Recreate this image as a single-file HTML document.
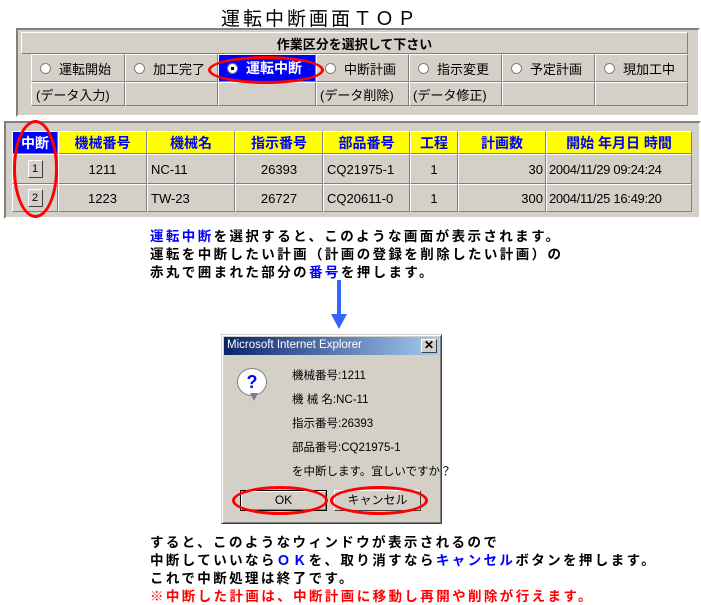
<!DOCTYPE html>
<html><head><meta charset="utf-8"><style>
*{margin:0;padding:0;box-sizing:border-box}
body{width:701px;height:602px;background:#fff;position:relative;overflow:hidden;font-family:"Liberation Sans","Noto Sans CJK JP",sans-serif;color:#000}
.a{position:absolute}
.cell{position:absolute;background:#d4d0c8;border:1px solid;border-color:#fff #808080 #808080 #fff;font-size:13px;display:flex;align-items:center;white-space:nowrap}
.rad{display:inline-block;width:11px;height:11px;border-radius:50%;background:#fff;border:1px solid #808080;margin:0 8px 0 8px;position:relative}
.t{font-size:13.5px;font-weight:bold;letter-spacing:2.4px;white-space:nowrap;left:150px}
.hd{background:#ff0;color:#0000ff;font-weight:bold;justify-content:center;font-size:14px}
.btn{width:15px;height:18px;background:#d4d0c8;border:1px solid;border-color:#fff #404040 #404040 #fff;font-size:11px;display:flex;align-items:center;justify-content:center;margin:auto}
.ell{position:absolute;border:3px solid #f00;border-radius:50%}
</style></head><body>
<div class="a" style="left:221px;top:4px;font-size:19px;letter-spacing:3px">運転中断画面ＴＯＰ</div>
<div class="a" style="left:16px;top:28px;width:684px;height:89px;background:#d4d0c8;border:2px solid;border-color:#808080 #fff #fff #808080"></div>
<div class="cell" style="left:21px;top:32px;width:667px;height:22px;justify-content:center;font-weight:bold">作業区分を選択して下さい</div>
<div class="cell" style="left:31px;top:54px;width:94px;height:28px"><span class="rad"></span>運転開始</div>
<div class="cell" style="left:125px;top:54px;width:93px;height:28px"><span class="rad"></span>加工完了</div>
<div class="cell" style="left:218px;top:54px;width:98px;height:28px;background:#0000ff;color:#fff;font-weight:bold;font-size:14px"><span class="rad"><span class="a" style="left:3px;top:3px;width:3px;height:3px;background:#000"></span></span>運転中断</div>
<div class="cell" style="left:316px;top:54px;width:93px;height:28px"><span class="rad"></span>中断計画</div>
<div class="cell" style="left:409px;top:54px;width:93px;height:28px"><span class="rad"></span>指示変更</div>
<div class="cell" style="left:502px;top:54px;width:93px;height:28px"><span class="rad"></span>予定計画</div>
<div class="cell" style="left:595px;top:54px;width:93px;height:28px"><span class="rad"></span>現加工中</div>
<div class="cell" style="left:31px;top:82px;width:94px;height:24px;padding-left:4px">(データ入力)</div>
<div class="cell" style="left:125px;top:82px;width:93px;height:24px"></div>
<div class="cell" style="left:218px;top:82px;width:98px;height:24px"></div>
<div class="cell" style="left:316px;top:82px;width:93px;height:24px;padding-left:3px">(データ削除)</div>
<div class="cell" style="left:409px;top:82px;width:93px;height:24px;padding-left:3px">(データ修正)</div>
<div class="cell" style="left:502px;top:82px;width:93px;height:24px"></div>
<div class="cell" style="left:595px;top:82px;width:93px;height:24px"></div>
<div class="ell" style="left:208px;top:56px;width:116px;height:28px"></div>

<div class="a" style="left:4px;top:121px;width:697px;height:98px;background:#d4d0c8;border:2px solid;border-color:#808080 #fff #fff #808080"></div>
<div class="cell hd" style="left:12px;top:131px;width:46px;height:23px;background:#0000ff;color:#fff">中断</div>
<div class="cell hd" style="left:58px;top:131px;width:89px;height:23px">機械番号</div>
<div class="cell hd" style="left:147px;top:131px;width:88px;height:23px">機械名</div>
<div class="cell hd" style="left:235px;top:131px;width:88px;height:23px">指示番号</div>
<div class="cell hd" style="left:323px;top:131px;width:87px;height:23px">部品番号</div>
<div class="cell hd" style="left:410px;top:131px;width:48px;height:23px">工程</div>
<div class="cell hd" style="left:458px;top:131px;width:88px;height:23px">計画数</div>
<div class="cell hd" style="left:546px;top:131px;width:146px;height:23px">開始 年月日 時間</div>

<div class="cell" style="left:12px;top:154px;width:46px;height:30px"><div class="btn">1</div></div>
<div class="cell" style="left:58px;top:154px;width:89px;height:30px;justify-content:center">1211</div>
<div class="cell" style="left:147px;top:154px;width:88px;height:30px;padding-left:3px">NC-11</div>
<div class="cell" style="left:235px;top:154px;width:88px;height:30px;justify-content:center">26393</div>
<div class="cell" style="left:323px;top:154px;width:87px;height:30px;padding-left:3px">CQ21975-1</div>
<div class="cell" style="left:410px;top:154px;width:48px;height:30px;justify-content:center">1</div>
<div class="cell" style="left:458px;top:154px;width:88px;height:30px;justify-content:flex-end;padding-right:2px">30</div>
<div class="cell" style="left:546px;top:154px;width:146px;height:30px;padding-left:2px;letter-spacing:-0.3px">2004/11/29 09:24:24</div>

<div class="cell" style="left:12px;top:184px;width:46px;height:28px"><div class="btn">2</div></div>
<div class="cell" style="left:58px;top:184px;width:89px;height:28px;justify-content:center">1223</div>
<div class="cell" style="left:147px;top:184px;width:88px;height:28px;padding-left:3px">TW-23</div>
<div class="cell" style="left:235px;top:184px;width:88px;height:28px;justify-content:center">26727</div>
<div class="cell" style="left:323px;top:184px;width:87px;height:28px;padding-left:3px">CQ20611-0</div>
<div class="cell" style="left:410px;top:184px;width:48px;height:28px;justify-content:center">1</div>
<div class="cell" style="left:458px;top:184px;width:88px;height:28px;justify-content:flex-end;padding-right:2px">300</div>
<div class="cell" style="left:546px;top:184px;width:146px;height:28px;padding-left:2px;letter-spacing:-0.3px">2004/11/25 16:49:20</div>
<div class="ell" style="left:13px;top:120px;width:45px;height:98px"></div>

<div class="a t" style="top:225px"><span style="color:#0000ff">運転中断</span>を選択すると、このような画面が表示されます。</div>
<div class="a t" style="top:243px">運転を中断したい計画（計画の登録を削除したい計画）の</div>
<div class="a t" style="top:261px">赤丸で囲まれた部分の<span style="color:#0000ff">番号</span>を押します。</div>

<div class="a" style="left:337px;top:280px;width:4px;height:36px;background:#3366ff"></div>
<div class="a" style="left:331px;top:314px;width:0;height:0;border-left:8px solid transparent;border-right:8px solid transparent;border-top:15px solid #3366ff"></div>

<div class="a" style="left:221px;top:334px;width:221px;height:190px;background:#d4d0c8;border:1px solid;border-color:#d4d0c8 #404040 #404040 #d4d0c8;box-shadow:inset 1px 1px 0 #fff,inset -1px -1px 0 #808080"></div>
<div class="a" style="left:224px;top:337px;width:215px;height:18px;background:linear-gradient(90deg,#0a246a,#a6caf0);color:#fff;font-size:11.5px;padding:2px 0 0 3px">Microsoft Internet Explorer</div>
<div class="a" style="left:421px;top:339px;width:16px;height:14px;background:#d4d0c8;border:1px solid;border-color:#fff #404040 #404040 #fff;font-size:12px;line-height:11px;text-align:center;font-weight:bold">✕</div>
<div class="a" style="left:237px;top:368px;width:30px;height:28px;border-radius:50%;background:#fff;border:1px solid #808080;color:#0000ff;font-weight:bold;font-size:18px;text-align:center;line-height:26px">?</div>
<div class="a" style="left:250px;top:393px;width:0;height:0;border-left:4px solid transparent;border-right:4px solid transparent;border-top:8px solid #808080"></div>
<div class="a" style="left:292px;top:364px;font-size:11.5px;line-height:24px">機械番号:1211<br>機 械 名:NC-11<br>指示番号:26393<br>部品番号:CQ21975-1<br>を中断します。宜しいですか？</div>
<div class="a" style="left:240px;top:490px;width:87px;height:21px;border:1px solid #000;box-shadow:inset 1px 1px 0 #fff,inset -1px -1px 0 #808080;font-size:12px;text-align:center;line-height:19px">OK</div>
<div class="a" style="left:334px;top:490px;width:87px;height:21px;border:1px solid;border-color:#fff #404040 #404040 #fff;font-size:12px;text-align:center;line-height:19px">キャンセル</div>
<div class="ell" style="left:232px;top:486px;width:96px;height:29px"></div>
<div class="ell" style="left:330px;top:486px;width:98px;height:29px"></div>

<div class="a t" style="top:531px">すると、このようなウィンドウが表示されるので</div>
<div class="a t" style="top:549px">中断していいなら<span style="color:#0000ff">ＯＫ</span>を、取り消すなら<span style="color:#0000ff">キャンセル</span>ボタンを押します。</div>
<div class="a t" style="top:567px">これで中断処理は終了です。</div>
<div class="a t" style="top:585px;color:#f00">※中断した計画は、中断計画に移動し再開や削除が行えます。</div>
</body></html>
